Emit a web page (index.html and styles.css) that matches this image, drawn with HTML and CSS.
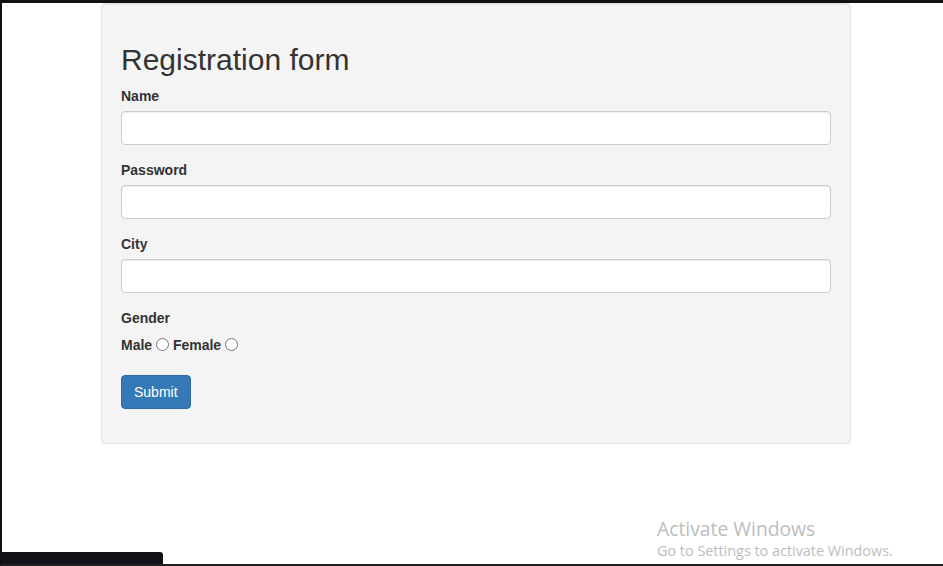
FILE: index.html
```html
<!DOCTYPE html>
<html>
<head>
<meta charset="utf-8">
<link rel="stylesheet" href="styles.css">
</head>
<body>
<div class="screen">
  <div class="page">
    <div class="well">
      <h2 class="title">Registration form</h2>
      <form class="form">
        <div class="group">
          <label class="lbl">Name</label>
          <input class="ctrl" type="text">
        </div>
        <div class="group">
          <label class="lbl">Password</label>
          <input class="ctrl" type="password">
        </div>
        <div class="group">
          <label class="lbl">City</label>
          <input class="ctrl" type="text">
        </div>
        <div class="group gender">
          <label class="lbl">Gender</label>
          <div class="radios"><label class="lbl">Male</label> <input class="radio" type="radio" name="g"> <label class="lbl">Female</label> <input class="radio" type="radio" name="g"></div>
        </div>
        <div class="actions">
          <button type="button" class="btn">Submit</button>
        </div>
      </form>
    </div>
  </div>
  <div class="watermark">
    <div class="wm1">Activate Windows</div>
    <div class="wm2">Go to Settings to activate Windows.</div>
  </div>
  <div class="taskbar"></div>
</div>
</body>
</html>
```
FILE: styles.css
```css
html, body {
  margin: 0;
  padding: 0;
  background: #fff;
}
.screen {
  position: relative;
  width: 943px;
  height: 566px;
  box-sizing: border-box;
  border-top: 3px solid #111;
  border-left: 2px solid #111;
  border-bottom: 2px solid #222;
  overflow: hidden;
  font-family: "Liberation Sans", Arial, sans-serif;
  font-size: 14px;
  line-height: 20px;
  color: #333;
}
.page {
  padding: 0 0 0 99px;
}
.well {
  width: 750px;
  box-sizing: border-box;
  background: #f4f4f4;
  border: 1px solid #e3e3e3;
  border-radius: 4px;
  padding: 19px;
  box-shadow: inset 0 1px 1px rgba(0,0,0,.05);
}
.title {
  margin: 20px 0 10px;
  font-size: 30px;
  font-weight: normal;
  line-height: 33px;
  color: #333;
}
.form {
  margin: 0;
}
.group {
  margin-bottom: 15px;
}
.lbl {
  display: inline-block;
  font-weight: bold;
  margin-bottom: 5px;
}
.group > .lbl {
  display: block;
  max-width: 100%;
}
.ctrl {
  display: block;
  width: 100%;
  height: 34px;
  box-sizing: border-box;
  padding: 6px 12px;
  font-size: 14px;
  font-family: inherit;
  background: #fff;
  border: 1px solid #ccc;
  border-radius: 4px;
  box-shadow: inset 0 1px 1px rgba(0,0,0,.075);
  margin: 0;
}
.radios {
  padding-top: 2px;
}
.radios .lbl {
  margin-bottom: 0;
}
.radio {
  margin: 0;
  width: 13px;
  height: 13px;
  vertical-align: -1px;
}
.gender {
  margin-bottom: 20px;
}
.actions {
  margin-bottom: 15px;
}
.btn {
  display: inline-block;
  height: 34px;
  padding: 6px 12px;
  font-size: 14px;
  line-height: 20px;
  font-family: inherit;
  color: #fff;
  background: #337ab7;
  border: 1px solid #2e6da4;
  border-radius: 4px;
  cursor: pointer;
}
.watermark {
  position: absolute;
  left: 655px;
  top: 513px;
  font-family: "Open Sans", "Noto Sans", sans-serif;
  color: #bdbdbd;
}
.wm1 {
  font-size: 19.3px;
  line-height: 25px;
}
.wm2 {
  font-size: 14.4px;
  line-height: 20px;
}
.taskbar {
  position: absolute;
  left: -2px;
  bottom: 0;
  width: 163px;
  height: 12px;
  background: #111318;
  border-top-right-radius: 3px;
}
```
